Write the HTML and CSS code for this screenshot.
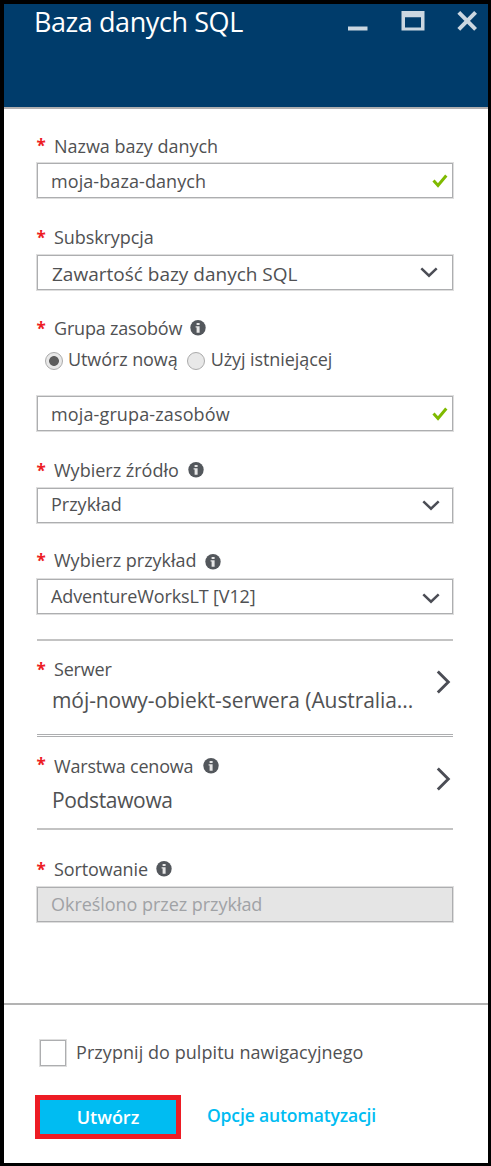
FILE: index.html
```
<!DOCTYPE html>
<html lang="pl">
<head>
<meta charset="utf-8">
<title>Baza danych SQL</title>
<link rel="stylesheet" href="styles.css">
</head>
<body>
<svg width="0" height="0" class="defs">
  <symbol id="info" viewBox="0 0 16 16"><circle cx="8" cy="7.8" r="7.7" fill="#53575c"/><path d="M6.6 3h3v2.1h-3zM5.6 6.2h4v6.6h-3V7.6h-1z" fill="#e6e6e6"/></symbol>
  <symbol id="check" viewBox="0 0 16 14"><path d="M1.5 6.6 6 11.5 14.3 1.5" fill="none" stroke="#7fba00" stroke-width="3"/></symbol>
  <symbol id="down" viewBox="0 0 18 11"><path d="M1.3 1.3 9 8.7l7.7-7.4" fill="none" stroke="#4b4d55" stroke-width="2.5"/></symbol>
  <symbol id="next" viewBox="0 0 15 24"><path d="M1.8 1.5 12.3 12 1.8 22.5" fill="none" stroke="#4b4d55" stroke-width="2.9"/></symbol>
</svg>
<div class="blade">
  <header class="header">
    <h1 class="title">Baza danych SQL</h1>
    <div class="window-actions">
      <svg width="20" height="20" viewBox="0 0 20 20"><path d="M0 15.5h19.5v4H0z" fill="#cbd7e1"/></svg>
      <svg width="24" height="20" viewBox="0 0 24 20"><path fill-rule="evenodd" d="M.5 0h23v19.6H.5zM4 6.2v10.3h16V6.2z" fill="#cbd7e1"/></svg>
      <svg width="20" height="20" viewBox="0 0 20 20"><path d="m1.8 1.4 16.8 17M18.6 1.4l-16.8 17" stroke="#cbd7e1" stroke-width="4"/></svg>
    </div>
  </header>

  <main class="form">
    <section class="field field-name">
      <div class="label"><span class="star">*</span><span class="label-text">Nazwa bazy danych</span></div>
      <div class="box"><span class="value">moja-baza-danych</span><svg class="check" width="16" height="14"><use href="#check"/></svg></div>
    </section>

    <section class="field field-subscription">
      <div class="label"><span class="star">*</span><span class="label-text">Subskrypcja</span></div>
      <div class="box"><span class="value">Zawartość bazy danych SQL</span><svg class="down" width="18" height="11"><use href="#down"/></svg></div>
    </section>

    <section class="field field-group">
      <div class="label"><span class="star">*</span><span class="label-text">Grupa zasobów</span><svg class="info" width="16" height="16"><use href="#info"/></svg></div>
      <div class="radios">
        <span class="radio selected"></span><span class="option-new">Utwórz nową</span>
        <span class="radio"></span><span class="option-existing">Użyj istniejącej</span>
      </div>
      <div class="box"><span class="value">moja-grupa-zasobów</span><svg class="check" width="16" height="14"><use href="#check"/></svg></div>
    </section>

    <section class="field field-source">
      <div class="label"><span class="star">*</span><span class="label-text">Wybierz źródło</span><svg class="info" width="16" height="16"><use href="#info"/></svg></div>
      <div class="box"><span class="value">Przykład</span><svg class="down" width="18" height="11"><use href="#down"/></svg></div>
    </section>

    <section class="field field-sample">
      <div class="label"><span class="star">*</span><span class="label-text">Wybierz przykład</span><svg class="info" width="16" height="16"><use href="#info"/></svg></div>
      <div class="box"><span class="value">AdventureWorksLT [V12]</span><svg class="down" width="18" height="11"><use href="#down"/></svg></div>
    </section>

    <section class="picker picker-server">
      <div>
        <div class="label"><span class="star">*</span><span class="label-text">Serwer</span></div>
        <div class="choice">mój-nowy-obiekt-serwera (Australia...</div>
      </div>
      <svg class="next" width="15" height="24"><use href="#next"/></svg>
    </section>

    <section class="picker picker-tier">
      <div>
        <div class="label"><span class="star">*</span><span class="label-text">Warstwa cenowa</span><svg class="info" width="16" height="16"><use href="#info"/></svg></div>
        <div class="choice">Podstawowa</div>
      </div>
      <svg class="next" width="15" height="24"><use href="#next"/></svg>
    </section>

    <section class="field field-collation">
      <div class="label"><span class="star">*</span><span class="label-text">Sortowanie</span><svg class="info" width="16" height="16"><use href="#info"/></svg></div>
      <div class="box disabled"><span class="value">Określono przez przykład</span></div>
    </section>
  </main>

  <footer class="footer">
    <div class="pin"><span class="checkbox"></span><span class="pin-text">Przypnij do pulpitu nawigacyjnego</span></div>
    <div class="actions"><button class="create" type="button">Utwórz</button><a class="automation">Opcje automatyzacji</a></div>
  </footer>
</div>
</body>
</html>
```
FILE: styles.css
```
* { box-sizing: border-box; }

body {
  margin: 0;
  background: #000;
  color: #505153;
  font: 18px/24px "Open Sans", "Noto Sans", sans-serif;
  white-space: nowrap;
}

svg { display: block; flex: none; }
.defs { position: absolute; }

.blade {
  display: flex;
  flex-direction: column;
  width: 484px;
  height: 1159px;
  margin: 4px 0 0 4px;
  background: #fff;
}

.header {
  display: flex;
  justify-content: space-between;
  height: 105px;
  padding: 0 11px 0 30px;
  background: #003c6b;
  border-bottom: 2px solid #b0afb0;
}

.title {
  margin: 0;
  color: #fff;
  font-size: 27px;
  font-weight: 400;
  line-height: 36px;
  letter-spacing: -0.42px;
}

.window-actions { display: flex; gap: 33px; padding-top: 7px; }
.window-actions svg:last-child { margin-left: -1px; }

.form { flex: 1; padding: 25px 35px 0 33px; }

.label { display: flex; height: 24px; }
.star {
  width: 17px;
  margin-top: 1px;
  color: #ed1c24;
  font-size: 17px;
  font-weight: 700;
  text-indent: -0.5px;
}
.info { margin: 4px 0 0 8px; }

.box {
  display: flex;
  align-items: center;
  justify-content: space-between;
  height: 35px;
  margin-top: 6px;
  padding: 0 4px 0 13px;
  border: 1px solid #adaeb0;
  box-shadow: 0 0 0 1px #dedede;
}
.down { margin-right: 8px; }
.disabled { background: #e5e5e5; color: #a0a2a5; }

.field-name .label-text { letter-spacing: -0.03px; }
.field-name .box { margin-top: 5px; }
.field-name .star { margin-top: 0; }
.field-name .value { letter-spacing: 0.08px; }

.field-subscription { margin-top: 27px; }
.field-subscription .label-text { letter-spacing: -0.08px; }
.field-subscription .value { padding: 2px 0 0 1px; font-size: 19px; letter-spacing: 0; }
.field-subscription .down { margin-right: 10px; }

.field-group { margin-top: 26px; }
.field-group .label-text { letter-spacing: -0.2px; }
.field-group .value { letter-spacing: 0.13px; }
.field-group .box { margin-top: 25px; }

.radios { display: flex; height: 24px; margin-top: 7px; padding-left: 8px; }
.radio {
  width: 18px;
  height: 18px;
  margin-top: 5px;
  border: 1px solid #aaa;
  border-radius: 50%;
  background: #e8e8e8;
}
.selected { background: radial-gradient(circle, #5c5c5c 4.5px, #e8e8e8 5.3px); }
.option-new { margin: 0 9px 0 5px; letter-spacing: -0.09px; }
.option-existing { margin-left: 6px; letter-spacing: -0.08px; }

.field-source { margin-top: 27px; }
.field-source .label-text { letter-spacing: 0; }
.field-source .info { margin-left: 9px; }
.field-source .value { padding-bottom: 3px; letter-spacing: 0; }

.field-sample { margin-top: 25px; }
.field-sample .label-text { letter-spacing: 0; }
.field-sample .info { margin-top: 6px; }
.field-sample .box { margin-top: 7px; }
.field-sample .value { padding-bottom: 2px; letter-spacing: -0.13px; }
.field-sample .down { margin-top: 3px; }

.picker { display: flex; justify-content: space-between; width: 416px; }
.picker .next { margin-right: 2px; }
.choice { padding-left: 15px; font-size: 21px; line-height: 30px; }

.picker-server {
  height: 98px;
  margin-top: 25px;
  padding-top: 16px;
  border-top: 2px solid #c3c3c3;
  border-bottom: 3px double #adaeb0;
}
.picker-server .label-text { letter-spacing: -0.2px; }
.picker-server .choice { margin-top: 4px; letter-spacing: -0.08px; }
.picker-server .next { margin-top: 13px; }

.picker-tier { height: 93px; padding-top: 17px; border-bottom: 2px solid #c3c3c3; }
.picker-tier .star { margin-top: -1px; }
.picker-tier .label-text { letter-spacing: -0.2px; }
.picker-tier .choice { margin-top: 7px; letter-spacing: -0.35px; }
.picker-tier .info { margin-left: 10px; }
.picker-tier .next { margin-top: 13px; }

.field-collation { margin-top: 27px; }
.field-collation .label-text { letter-spacing: -0.1px; }
.field-collation .info { margin-left: 8px; }
.field-collation .value { padding-bottom: 1px; letter-spacing: -0.04px; }

.footer { height: 160px; padding: 35px 31px 0; border-top: 2px solid #b3b3b3; }
.pin { display: flex; padding-left: 5px; }
.checkbox {
  width: 26px;
  height: 26px;
  border: 1px solid #adaeb0;
  box-shadow: 0 0 0 1px #dedede;
}
.pin-text { margin-left: 10px; letter-spacing: 0.06px; }

.actions { display: flex; margin-top: 29px; }
.create {
  width: 146px;
  height: 44px;
  padding: 0;
  border: 5px solid #ed1c24;
  background: #00bcf2;
  color: #fff;
  font: 600 18px/34px "Open Sans", "Noto Sans", sans-serif;
}
.automation {
  margin: 8px 0 0 26px;
  color: #00bcf2;
  font-size: 17.5px;
  font-weight: 600;
  letter-spacing: -0.15px;
}
```
